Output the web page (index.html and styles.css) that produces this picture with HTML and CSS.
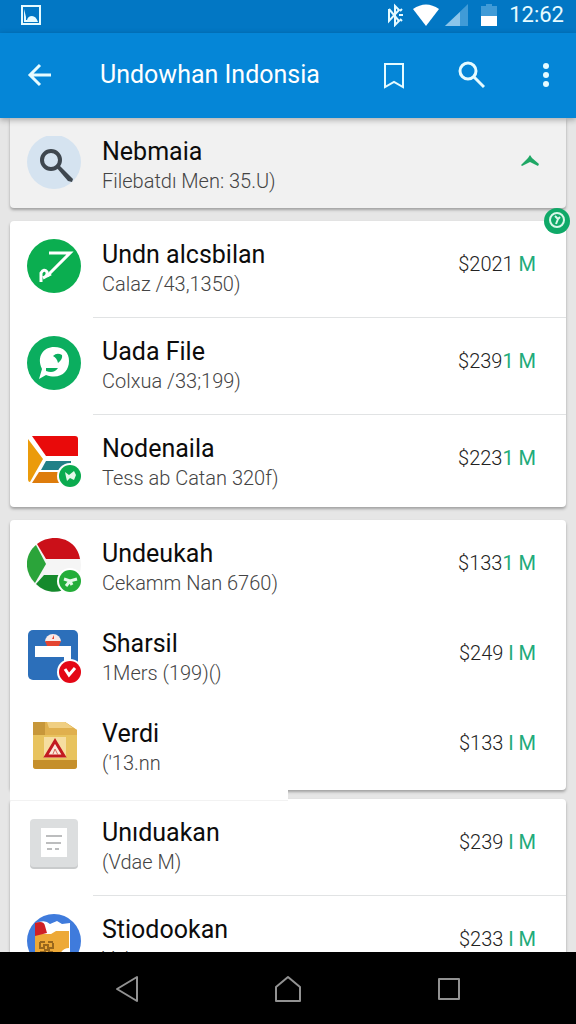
FILE: index.html
```html
<!DOCTYPE html>
<html lang="id">
  <head>
    <meta charset="UTF-8" />
    <meta name="viewport" content="width=device-width, initial-scale=1.0" />
    <title>Undowhan Indonsia</title>
    <link rel="stylesheet" href="styles.css">
  </head>
  <body>
    <div class="status-bar">
      <svg class="notification" width="22" height="22" viewBox="0 0 22 22">
        <rect x="2" y="2" width="18" height="18" fill="none" stroke="#e6fbff" stroke-width="2" />
        <path d="M4 5l2 8v3h1q1-4 5-4 4 0 6 6H4z" fill="#e6fbff" />
      </svg>
      <svg width="18" height="24" viewBox="0 0 18 24" fill="none" stroke="#e6fbff" stroke-width="2">
        <path d="M3 6l10 12-4 4V3l4 4L3 18V6M13 12h4M14 8l2-2M14 16l2 2" />
      </svg>
      <svg class="wifi" width="28" height="24" viewBox="0 0 28 24">
        <path d="M1 6Q14-3 27 6L14 23z" fill="#fff" />
      </svg>
      <svg class="signal" width="24" height="24" viewBox="0 0 24 24">
        <path d="M0 23L23 1v22z" fill="#409bd7" />
        <path d="M0 23L15 9v14z" fill="#8cc5ea" />
      </svg>
      <svg class="battery" width="16" height="24" viewBox="0 0 16 24">
        <path d="M0 3h5V1h6v2h5v10H0z" fill="#409bd7" />
        <path d="M0 13h16v10H0z" fill="#fff" />
      </svg>
      <span class="clock">12:62</span>
    </div>

    <header class="app-bar">
      <button class="icon-btn" aria-label="Back">
        <svg width="26" height="26" viewBox="0 0 26 26">
          <path d="M24 13H3M13 3L3 13l10 10" />
        </svg>
      </button>
      <h1>Undowhan Indonsia</h1>
      <button class="icon-btn" aria-label="Bookmark">
        <svg width="26" height="30" viewBox="0 0 26 30">
          <path d="M4 4h18v23l-9-5-9 5z" stroke-width="2" />
        </svg>
      </button>
      <button class="icon-btn" aria-label="Search">
        <svg width="30" height="30" viewBox="0 0 30 30">
          <circle cx="13" cy="11" r="8" />
          <path d="M19 17l10 10" />
        </svg>
      </button>
      <button class="icon-btn" aria-label="More">
        <svg class="dots" width="8" height="26" viewBox="0 0 8 26">
          <circle cx="4" cy="4" r="3" />
          <circle cx="4" cy="13" r="3" />
          <circle cx="4" cy="22" r="3" />
        </svg>
      </button>
    </header>

    <main>
      <section class="card card-top">
        <div class="row">
          <svg class="icon" viewBox="0 0 55 55">
            <circle cx="27" cy="26" r="27" fill="#d5e3f0" />
            <circle cx="24" cy="24" r="9" fill="none" stroke="#3f474f" stroke-width="4" />
            <path d="M29 31l3-2 14 14-1 3-4-1z" fill="#3f474f" />
          </svg>
          <div class="content">
            <div class="text">
              <h2>Nebmaia</h2>
              <p>Filebatdı Men: 35.U)</p>
            </div>
            <button class="collapse" aria-label="Collapse">
              <svg width="20" height="14" viewBox="0 0 20 14">
                <path d="M1 11L8 4l2-3 2 3 7 6-1 2-8-4-8 4z" fill="#1fa765" />
              </svg>
            </button>
          </div>
        </div>
      </section>

      <section class="card">
        <svg class="badge" viewBox="0 0 26 26">
          <circle cx="13" cy="13" r="13" fill="#0fa968" />
          <circle cx="13" cy="12" r="7" fill="none" stroke="#d9f8e9" stroke-width="2" />
          <path d="M11 8l3 3 2-2M14 11l-2 5" fill="none" stroke="#d9f8e9" stroke-width="2" />
        </svg>
        <div class="row divided">
          <svg class="icon" viewBox="0 0 55 55">
            <circle cx="27" cy="27" r="27" fill="#0bae50" />
            <path d="M22 14h21L20 37" fill="none" stroke="#fff" stroke-width="3" />
            <path d="M14 43v-9q3-5 6-1 1 4-4 6M18 38l6-3" fill="none" stroke="#fff" stroke-width="3" />
          </svg>
          <div class="content">
            <div class="text">
              <h2>Undn alcsbilan</h2>
              <p>Calaz /43,1350)</p>
            </div>
            <span class="price">$2021 <b>M</b></span>
          </div>
        </div>
        <div class="row divided">
          <svg class="icon" viewBox="0 0 55 55">
            <circle cx="27" cy="27" r="27" fill="#0bae5f" />
            <path d="M12 43l3-10C9 20 17 11 27 11c10 0 15 6 15 14 0 11-9 19-23 14z" fill="#fff" />
            <path d="M26 20q4-4 9-1 1 4-4 8-1-5-5-7zM19 32h12q-4 6-12 3z" fill="#0bae5f" />
          </svg>
          <div class="content">
            <div class="text">
              <h2>Uada File</h2>
              <p>Colxua /33;199)</p>
            </div>
            <span class="price">$239<i>1</i> <b>M</b></span>
          </div>
        </div>
        <div class="row">
          <svg class="icon" viewBox="0 0 55 55">
            <rect x="1" y="3" width="50" height="47" rx="3" fill="#fff" />
            <path d="M5 3h43q3 0 3 3v17H19z" fill="#e90a0a" />
            <path d="M1 6l15 20L3 49q-2 0-2-3z" fill="#eb9b0b" />
            <path d="M19 28h25v9H14z" fill="#218087" />
            <path d="M12 39h28v11H5z" fill="#de7c0c" />
            <circle cx="43" cy="43" r="13" fill="#fff" />
            <circle cx="43" cy="43" r="11" fill="#0bab4f" />
            <path d="M38 39l4 3 5-4 2 4-2 5-4-2-3 3-1-4z" fill="#e5f8e9" />
          </svg>
          <div class="content">
            <div class="text">
              <h2>Nodenaila</h2>
              <p>Tess ab Catan 320f)</p>
            </div>
            <span class="price">$223<i>1</i> <b>M</b></span>
          </div>
        </div>
      </section>

      <section class="card card-joined">
        <div class="row">
          <svg class="icon" viewBox="0 0 55 55">
            <circle cx="27" cy="27" r="27" fill="#f5f5f5" />
            <path d="M10 6C22-4 49-3 53 21H19z" fill="#cb1019" />
            <path d="M9 7L19 26 8 45C-3 34-3 17 9 7z" fill="#2ba43a" />
            <path d="M17 37h33C45 54 23 60 9 46z" fill="#158a2c" />
            <circle cx="43" cy="43" r="13" fill="#fff" />
            <circle cx="43" cy="43" r="11" fill="#23ad39" />
            <path d="M37 41l6 2 7-2M43 43l-4 5M43 43l2 4" fill="none" stroke="#e5f8e9" stroke-width="3" />
          </svg>
          <div class="content">
            <div class="text">
              <h2>Undeukah</h2>
              <p>Cekamm Nan 6760)</p>
            </div>
            <span class="price">$133<i>1</i> <b>M</b></span>
          </div>
        </div>
        <div class="row">
          <svg class="icon" viewBox="0 0 55 55">
            <rect x="1" y="2" width="50" height="50" rx="5" fill="#2c6fba" />
            <path d="M8 18h36v23h-7V29H8z" fill="#fff" />
            <path d="M18 14a8 8 0 0 1 16 0z" fill="#f8e9e7" />
            <path d="M18 13h16l-2 5H20z" fill="#e44531" />
            <path d="M25 11l2-4v4z" fill="#e44531" />
            <circle cx="43" cy="44" r="13" fill="#fff" />
            <circle cx="43" cy="44" r="11" fill="#e40715" />
            <path d="M38 41l4 6 6-7" fill="none" stroke="#fff" stroke-width="3" />
          </svg>
          <div class="content">
            <div class="text">
              <h2>Sharsil</h2>
              <p>1Mers (199)()</p>
            </div>
            <span class="price">$249 <i>I</i> <b>M</b></span>
          </div>
        </div>
        <div class="row">
          <svg class="icon" viewBox="0 0 55 55">
            <path d="M6 4h32l12 8v36q0 3-3 3H9q-3 0-3-3z" fill="#e8c35e" />
            <path d="M18 4h20l12 8v5H18z" fill="#e0b04e" />
            <path d="M20 4h18l8 6H22z" fill="#f0cf82" />
            <path d="M6 4h12v13H6z" fill="#c7973a" />
            <path d="M6 42h44v6q0 3-3 3H9q-3 0-3-3z" fill="#c58f2b" />
            <path d="M17 19h22v21H17z" fill="#f6dea0" />
            <path d="M28 23L19 38h18z" fill="#fbe9dc" stroke="#c21a20" stroke-width="3" />
            <path d="M26 36l2-5 3 6" fill="none" stroke="#d9685b" />
          </svg>
          <div class="content">
            <div class="text">
              <h2>Verdi</h2>
              <p>('13.nn</p>
            </div>
            <span class="price">$133 <i>I</i> <b>M</b></span>
          </div>
        </div>
      </section>

      <section class="card">
        <div class="row divided">
          <svg class="icon" viewBox="0 0 55 55">
            <rect x="3" y="4" width="48" height="48" rx="4" fill="#c9cbcc" />
            <rect x="3" y="2" width="48" height="48" rx="4" fill="#dcdedf" />
            <path d="M14 11h26v29H14z" fill="#fff" />
            <path d="M19 19h16M19 26h15M20 32h5M28 32h4" stroke="#bcbdbe" stroke-width="2" />
          </svg>
          <div class="content">
            <div class="text">
              <h2>Unıduakan</h2>
              <p>(Vdae M)</p>
            </div>
            <span class="price">$239 <i>I</i> <b>M</b></span>
          </div>
        </div>
        <div class="row">
          <svg class="icon" viewBox="0 0 55 55">
            <circle cx="27" cy="27" r="27" fill="#3f7bdc" />
            <path d="M9 9q9-4 14 1l7-3 5 3 8-1v29l-6 2-5 6H9z" fill="#fff" />
            <path d="M8 20h16l5-3h13v17q-6 0-9 6l-4 8H8z" fill="#eda937" />
            <path d="M8 9q9-3 10 3l2 7-12 3z" fill="#cf2026" />
            <path d="M13 28h5M21 28h5M13 28v6h4v-3h4v3h5v-5M13 38h5v-2h4v2h4" fill="none" stroke="#98671d" stroke-width="2" />
          </svg>
          <div class="content">
            <div class="text">
              <h2>Stiodookan</h2>
              <p>Valar</p>
            </div>
            <span class="price">$233 <i>I</i> <b>M</b></span>
          </div>
        </div>
      </section>
    </main>

    <nav class="nav-bar">
      <button aria-label="Back">
        <svg width="28" height="28" viewBox="0 0 28 28"><path d="M24 2v24L4 14z" /></svg>
      </button>
      <button aria-label="Home">
        <svg width="28" height="28" viewBox="0 0 28 28"><path d="M2 12L14 2l12 10v14H2z" /></svg>
      </button>
      <button aria-label="Recent apps">
        <svg width="28" height="28" viewBox="0 0 28 28"><path d="M4 4h20v20H4z" /></svg>
      </button>
    </nav>
  </body>
</html>
```

FILE: styles.css
```css
:root {
  --status: #0277c4;
  --primary: #0586d7;
  --green: #22ab7a;
  --surface: #ffffff;
  --line: #e1e3e4;
  --font: Roboto, "Liberation Sans", sans-serif;
}

* {
  box-sizing: border-box;
}

body {
  display: flex;
  flex-direction: column;
  height: 100vh;
  margin: 0;
  overflow: hidden;
  background: #e6e6e6;
  font-family: var(--font);
}

h1,
h2,
p {
  margin: 0;
  white-space: nowrap;
}

svg {
  display: block;
  flex: none;
}

button {
  display: flex;
  align-items: center;
  justify-content: center;
  padding: 0;
  border: none;
  background: none;
  cursor: pointer;
}

.status-bar {
  display: flex;
  flex: none;
  align-items: center;
  height: 33px;
  padding: 0 12px 4px 20px;
  background: var(--status);
  color: #e6fbff;
}

.notification {
  margin-right: auto;
}

.wifi {
  margin-left: 8px;
}

.signal {
  margin-left: 5px;
}

.battery {
  margin: 0 12px;
}

.clock {
  font-size: 22px;
  line-height: 28px;
}

.app-bar {
  position: relative;
  z-index: 1;
  display: flex;
  flex: none;
  align-items: center;
  gap: 36px;
  height: 85px;
  padding: 0 10px 2px 20px;
  background: var(--primary);
  box-shadow: 0 2px 6px rgba(0, 0, 0, 0.3);
  color: #fff;
}

.app-bar h1 {
  flex: 1;
  margin-left: 4px;
  font-size: 25px;
  font-weight: 400;
  line-height: 32px;
}

.icon-btn {
  flex: none;
  width: 40px;
  height: 48px;
}

.icon-btn svg {
  fill: none;
  stroke: #e6fbff;
  stroke-width: 3;
}

.icon-btn .dots {
  fill: #e6fbff;
  stroke: none;
}

main {
  flex: 1;
  min-height: 0;
  padding: 0 10px;
  overflow: hidden;
}

.card {
  position: relative;
  margin-bottom: 13px;
  border-radius: 4px;
  background: var(--surface);
  box-shadow: 0 2px 3px rgba(0, 0, 0, 0.3);
}

.card-top {
  border-radius: 0 0 4px 4px;
  background: #f1f1f1;
}

.card-joined {
  margin-bottom: 9px;
}

/* the left side runs on into the next card */
.card-joined::after {
  content: "";
  position: absolute;
  top: calc(100% - 4px);
  left: 0;
  z-index: 1;
  width: 50%;
  height: 14px;
  border-bottom: 1px solid #f2f2f2;
  background: var(--surface);
}

.row {
  display: flex;
  padding-left: 17px;
}

.icon {
  width: 55px;
  height: 55px;
  margin-top: 18px;
}

.content {
  display: flex;
  flex: 1;
  align-items: flex-start;
  justify-content: space-between;
  margin-left: 11px;
  padding: 19px 30px 13px 9px;
}

.divided ~ .row .content {
  padding-bottom: 15px;
}

.divided.row .content {
  padding-bottom: 19px;
  border-bottom: 1px solid var(--line);
}

.text h2 {
  font-size: 25px;
  font-weight: 400;
  line-height: 30px;
  color: #0c0c0c;
}

.text p {
  font-size: 20px;
  font-weight: 300;
  line-height: 28px;
  color: #444;
}

.price {
  margin-top: 10px;
  font-size: 20px;
  font-weight: 300;
  line-height: 28px;
  color: #222;
  white-space: nowrap;
}

.price b,
.price i {
  font-style: normal;
  font-weight: 400;
  color: var(--green);
}

.collapse {
  width: 20px;
  height: 28px;
  margin-top: 10px;
  margin-right: -4px;
}

.badge {
  position: absolute;
  top: -13px;
  right: -4px;
  width: 26px;
  height: 26px;
}

.nav-bar {
  position: relative;
  z-index: 1;
  display: flex;
  flex: none;
  justify-content: center;
  height: 72px;
  padding-top: 2px;
  background: #000;
}

.nav-bar button {
  width: 28%;
}

.nav-bar svg {
  fill: none;
  stroke: #929292;
  stroke-width: 2;
  stroke-linejoin: round;
}
```
